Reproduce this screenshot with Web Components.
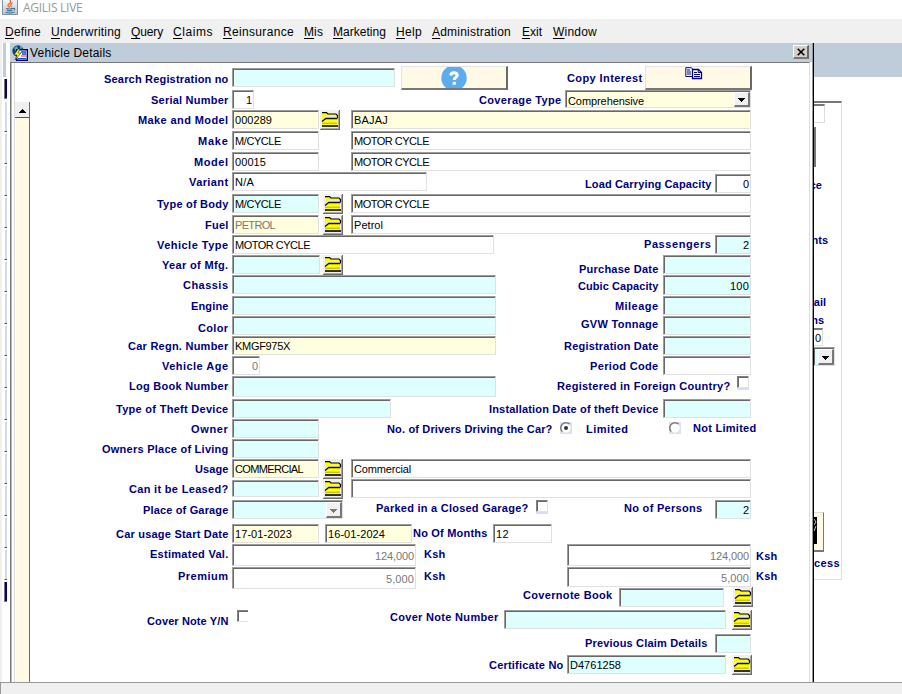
<!DOCTYPE html>
<html lang="en">
<head>
<meta charset="utf-8">
<title>AGILIS LIVE</title>
<style>
html,body{margin:0;width:902px;height:694px;overflow:hidden;background:#fff;font-family:"Liberation Sans",Arial,sans-serif}
</style>
</head>
<body>
<agilis-app></agilis-app>
<script>
const define = (name, html, init) => {
  const t = document.createElement('template');
  t.innerHTML = html;
  customElements.define(name, class extends HTMLElement {
    connectedCallback() {
      if (this.shadowRoot) return;
      this.attachShadow({mode: 'open'}).append(t.content.cloneNode(true));
      if (init) init(this, this.shadowRoot);
    }
  });
};

/* Single line of text whose tracking is adjusted so that it fills the "w" attribute. */
define('fit-text', `<style>
:host{display:block;white-space:pre;overflow:visible}
span{display:inline-block}
</style><span><slot></slot></span>`, (el, root) => {
  const w = +el.getAttribute('w');
  if (!w) return;
  el.style.width = w + 'px';
  const span = root.querySelector('span');
  const natural = span.getBoundingClientRect().width;
  span.style.letterSpacing = ((w - natural) / el.textContent.length) + 'px';
});

define('ui-label', `<style>
:host{display:block;flex:none;height:14px;font:bold 11px/14px "Liberation Sans",Arial,sans-serif;color:#00007b}
</style><slot></slot>`);

define('ui-field', `<style>
:host{display:flex;flex:none;box-sizing:border-box;align-items:center;background:#fff;color:#000;
 border:1px solid #e1e1e1;border-top-color:#9c9c9c;border-left-color:#9c9c9c;
 box-shadow:inset 1px 1px #686868;padding:1px 1px 0 2px;font:11px/14px "Liberation Sans",Arial,sans-serif}
:host([tone=c]){background:#dfffff}
:host([tone=y]){background:#ffffdf}
:host([right]){justify-content:flex-end}
:host([dim]){color:#777}
</style><slot></slot>`);

define('ui-combo', `<style>
:host{display:flex;flex:none;box-sizing:border-box;background:#ffffdf;
 border:1px solid #e1e1e1;border-top-color:#9c9c9c;border-left-color:#9c9c9c;
 box-shadow:inset 1px 1px #686868;padding:1px 0 0 2px;font:11px/14px "Liberation Sans",Arial,sans-serif;align-items:center;justify-content:space-between}
:host([tone=c]){background:#dfffff}
.txt{padding-top:2px}
b{display:flex;align-items:center;justify-content:center;box-sizing:border-box;width:16px;height:100%;background:#f0f0f0;padding-top:2px;
 border:1px solid #fff;border-right:2px solid #777;border-bottom:2px solid #777}
svg{display:block}
:host([dim]) svg{fill:#777}
</style><span class="txt"><slot></slot></span><b><svg width="7" height="4" shape-rendering="crispEdges"><path d="M0 0H7V1H6V2H5V3H4V4H3V3H2V2H1V1H0z"/></svg></b>`);

define('ui-button', `<style>
:host{display:flex;flex:none;box-sizing:border-box;justify-content:center;align-items:flex-start;background:#fff9e6;overflow:hidden;
 border:1px solid #e3e3e3;border-right:2px solid #696969;border-bottom:2px solid #777}
svg{display:block}
</style><slot></slot>`);

define('lov-button', `<style>
:host{display:block;flex:none;width:20px;height:20px}
svg{display:block}
</style><svg width="20" height="20" viewBox="0 0 20 20">
<path d="M0 0H20V20H0z" fill="#f0f0f0"/><path d="M0 19H19V0H20V20H0z" fill="#6a6a6a"/><path d="M1 18H18V1H19V19H1z" fill="#a8a8a8"/>
<path d="M2 3H7L8 4H16L17 5V17H2z" fill="#ff0"/>
<path d="M2 2.6H6.5L8 4H16L17.5 5.5V8" fill="none" stroke="#000" stroke-width="1.2"/>
<path d="M2 10.6L5.5 6.9H16" fill="none" stroke="#e9e9e9" stroke-width="1.8"/>
<path d="M2 11.6L5.8 8.5H17.5" fill="none" stroke="#111" stroke-width="1.3"/>
<path d="M2 13.2H17" stroke="#8d8d00" stroke-width=".7"/>
<path d="M2 16H18" stroke="#000" stroke-width="1.6"/></svg>`);

define('ui-check', `<style>
:host{display:block;flex:none;box-sizing:border-box;width:12px;height:12px;border:1px solid #e3e3e3;border-top-color:#808080;border-left-color:#808080;
 box-shadow:inset 1px 1px #696969,0 2px #d6def4}
:host([open]){border-right:0;box-shadow:inset 1px 1px #696969}
</style>`);

define('ui-radio', `<style>
:host{display:block;flex:none;width:12px;height:12px;background:#dbe3f5}
svg{display:block}
circle.dot{display:none}
:host([on]) circle.dot{display:block}
</style><svg width="12" height="12"><circle cx="6" cy="6" r="5.2" fill="#fff"/><path d="M2.3 9.7A5.2 5.2 0 0 1 9.7 2.3" fill="none" stroke="#777" stroke-width="1.5"/><path d="M9.7 2.3A5.2 5.2 0 0 1 2.3 9.7" fill="none" stroke="#ddd"/><circle class="dot" cx="6" cy="6" r="2" fill="#333"/></svg>`);

define('form-row', `<style>
:host{display:flex;flex:none;align-items:flex-start}
</style><slot></slot>`);

/* The form: each row is [top, ...items]; spans are measured along the form's ruler. */
const L = (a, b, c, text) => ({k: 'label', a, b, y: c - 7, text});
const F = (a, b, y, h, tone = '', text = '', tw = 0, flags = '') => ({k: 'field', a, b, y, h, tone, text, tw, flags});
const I = (a, y) => ({k: 'lov', a, b: a + 20, y});
const rows = [
  [66, L(104,228,79,'Search Registration no'), F(232,395,68,19,'c'), {k:'help',a:401,b:508,y:66}, L(567,642,78,'Copy Interest'), {k:'copy',a:645,b:752,y:66}],
  [90, L(151,228,100,'Serial Number'), F(232,254,90,19,'','1',6,'right'), L(479,561,100,'Coverage Type'), {k:'combo',a:565,b:751,y:90,h:18,tone:'y',text:'Comprehensive',tw:76}],
  [110, L(138,228,120,'Make and Model'), F(232,319,110,19,'y','000289',37), I(320,110), F(351,751,110,19,'y','BAJAJ',34)],
  [131, L(198,228,141,'Make'), F(232,319,131,19,'','M/CYCLE',46), F(351,751,131,19,'','MOTOR CYCLE',75)],
  [152, L(194,228,162,'Model'), F(232,319,152,19,'','00015',31), F(351,751,152,19,'','MOTOR CYCLE',75)],
  [172, L(189,228,182,'Variant'), F(232,427,172,19,'','N/A',19), L(585,711,184,'Load Carrying Capacity'), F(715,751,174,19,'','0',6,'right')],
  [194, L(157,228,204,'Type of Body'), F(232,319,194,19,'c','M/CYCLE',46), I(323,194), F(351,751,194,19,'','MOTOR CYCLE',75)],
  [215, L(205,228,225,'Fuel'), F(232,319,215,19,'y','PETROL',40,'dim'), I(323,215), F(351,751,215,19,'','Petrol',29)],
  [235, L(157,228,245,'Vehicle Type'), F(232,494,235,19,'','MOTOR CYCLE',75), L(644,711,244,'Passengers'), F(715,751,235,19,'c','2',6,'right')],
  [255, L(162,228,265,'Year of Mfg.'), F(232,320,255,19,'c'), I(323,255), L(579,658,269,'Purchase Date'), F(663,751,255,19,'c')],
  [275, L(183,228,285,'Chassis'), F(232,496,275,19,'c'), L(578,658,286,'Cubic Capacity'), F(663,751,275,20,'c','100',19,'right')],
  [296, L(191,228,306,'Engine'), F(232,496,296,19,'c'), L(615,658,306,'Mileage'), F(663,751,296,19,'c')],
  [316, L(198,228,328,'Color'), F(232,496,316,19,'c'), L(581,658,324,'GVW Tonnage'), F(663,751,316,19,'c')],
  [336, L(128,228,346,'Car Regn. Number'), F(232,496,336,19,'y','KMGF975X',55), L(564,658,346,'Registration Date'), F(663,751,336,19,'c')],
  [356, L(162,228,366,'Vehicle Age'), F(232,260,356,19,'','0',6,'right dim'), L(590,658,366,'Period Code'), F(663,751,356,19)],
  [376, L(129,228,386,'Log Book Number'), F(232,496,376,21,'c'), L(557,730,386,'Registered in Foreign Country?'), {k:'check',a:737,b:749,y:376}],
  [399, L(116,228,409,'Type of Theft Device'), F(232,391,399,19,'c'), L(489,658,409,'Installation Date of theft Device'), F(663,751,399,19,'c')],
  [419, L(191,228,429,'Owner'), F(232,319,419,19,'c'), L(387,552,429,'No. of Drivers Driving the Car?'), {k:'radio',a:560,b:572,y:422,flags:'on'}, L(586,628,429,'Limited'), {k:'radio',a:669,b:681,y:422}, L(693,756,428,'Not Limited')],
  [439, L(102,228,449,'Owners Place of Living'), F(232,319,439,19,'c')],
  [459, L(195,228,469,'Usage'), F(232,319,459,19,'y','COMMERCIAL',68), I(323,459), F(351,751,459,19,'','Commercial',57)],
  [479, L(129,228,489,'Can it be Leased?'), F(232,319,480,17,'c'), I(323,479), F(351,751,479,19)],
  [500, L(143,228,510,'Place of Garage'), {k:'combo',a:232,b:343,y:500,h:19,tone:'c',text:'',flags:'dim'}, L(376,528,508,'Parked in a Closed Garage?'), {k:'check',a:536,b:548,y:500}, L(624,702,508,'No of Persons'), F(715,751,500,19,'c','2',6,'right')],
  [524, L(116,228,534,'Car usage Start Date'), F(232,319,524,19,'y','17-01-2023',57), F(325,412,524,19,'y','16-01-2024',57), L(413,487,533,'No Of Months'), F(493,552,524,19,'','12',13)],
  [544, L(150,228,554,'Estimated Val.'), F(232,416,544,22,'','124,000',39,'right dim'), L(424,445,554,'Ksh'), F(567,751,544,22,'','124,000',39,'right dim'), L(756,777,556,'Ksh')],
  [567, L(178,228,576,'Premium'), F(232,416,567,22,'','5,000',28,'right dim'), L(424,445,576,'Ksh'), F(567,751,567,20,'','5,000',28,'right dim'), L(756,777,576,'Ksh')],
  [587, L(523,612,595,'Covernote Book'), F(619,724,588,19,'c'), I(733,587)],
  [610, L(147,228,621,'Cover Note Y/N'), {k:'check',a:237,b:248,y:610,flags:'open'}, L(390,498,617,'Cover Note Number'), F(504,726,610,19,'c'), I(732,610)],
  [634, L(585,707,643,'Previous Claim Details'), F(715,751,634,19,'c')],
  [655, L(489,563,665,'Certificate No'), F(567,726,655,19,'c','D4761258',51), I(732,655)]
];
const fit = (w, t) => t ? `<fit-text w="${w}">${t}</fit-text>` : '';
const help = `<svg width="26" height="22" viewBox="0 0 26 22"><circle cx="13" cy="11" r="12.7" fill="#5cadf0"/><path d="M9.7 8.5Q10 5.7 13 5.7T16.3 8.3C16.3 10.3 13.3 10.3 13.3 13" fill="none" stroke="#fff" stroke-width="3"/><path d="M11.7 14.8H14.9V17.7H11.7z" fill="#fff"/></svg>`;
const copy = `<svg style="margin-right:9px" width="18" height="13" viewBox="0 0 18 13" fill="none" stroke="#00007b"><path d="M7 9.5H.8V.7H6.5L8 2.5" fill="#fff"/><path d="M2 3H5M2 5H6M2 7H6"/><path d="M7.5 2.5H13.5L16.5 5.5V11.5H7.5z" fill="#fff" stroke-width="1.3"/><path d="M13.2 2.5V5.5H16.5M9 5.5H12M9 7.5H15M9 9.5H15"/></svg>`;
const item = (o, gap, top) => {
  const w = o.b - o.a, pos = `margin:${o.y - top}px 0 0 ${gap}px;`;
  const box = `style="${pos}width:${w}px;height:${o.h}px"`;
  switch (o.k) {
    case 'label': return `<ui-label style="${pos}width:${w}px">${fit(w + .5, o.text)}</ui-label>`;
    case 'field': return `<ui-field tone="${o.tone}" ${o.flags} ${box}>${fit(o.tw, o.text)}</ui-field>`;
    case 'combo': return `<ui-combo tone="${o.tone}" ${o.flags || ''} ${box}>${fit(o.tw, o.text)}</ui-combo>`;
    case 'lov': return `<lov-button style="${pos}"></lov-button>`;
    case 'check': return `<ui-check ${o.flags || ''} style="${pos}width:${w}px"></ui-check>`;
    case 'radio': return `<ui-radio ${o.flags || ''} style="${pos}"></ui-radio>`;
    default: return `<ui-button style="${pos}width:${w}px;height:24px">${o.k === 'help' ? help : copy}</ui-button>`;
  }
};
define('vehicle-form', `<style>
:host{display:flex;flex-direction:column;flex:1;min-width:0;padding-top:3px}
</style>`, (el, root) => {
  const box = document.createElement('template');
  box.innerHTML = rows.map(([top, ...items], i) => {
    const next = rows[i + 1] ? rows[i + 1][0] : 676;
    let cursor = 30;
    return `<form-row style="height:${next - top}px">` + items.map(o => {
      const s = item(o, o.a - cursor, top);
      cursor = o.b;
      return s;
    }).join('') + '</form-row>';
  }).join('');
  root.append(document.importNode(box.content, true));
});

define('scroll-track', `<style>
:host{display:flex;flex-direction:column;flex:none;width:15px;padding-top:39px;margin-left:3px;border-left:1px solid #ddd}
.up{display:flex;align-items:center;justify-content:center;height:16px;box-sizing:border-box;background:#f0f0f0;border-right:1px solid #696969;border-bottom:1px solid #555;padding-top:2px}
.track{flex:1;background:#fff9e6;margin-left:1px;border-right:1px solid #696969}
</style><div class="up"><svg width="7" height="4" shape-rendering="crispEdges"><path d="M3 0H4V1H5V2H6V3H7V4H0V3H1V2H2V1H3z"/></svg></div><div class="track"></div>`);

define('vehicle-window', `<style>
:host{display:flex;flex-direction:column;flex:none;box-sizing:border-box;width:804px;background:#fff;border-right:1px solid #000;box-shadow:inset -1px 0 #999}
header{display:flex;align-items:center;height:19px;flex:none;background:#bfccda;padding:0 3px 0 2px;margin-right:1px;font-size:12px;line-height:16px}
header svg{flex:none;margin-right:2px}
header i{display:flex;align-items:center;justify-content:center;margin-left:auto;width:16px;height:14px;box-sizing:border-box;background:#d4d0c8;border:1px solid #fff;border-right:2px solid #696969;border-bottom:2px solid #777;margin-top:-1px}
header i svg{margin:0}
main{flex:1;min-height:0;display:flex;overflow:hidden;border:1px solid #777;border-width:1px 0 0 1px;margin-right:3px;border-right:1px solid #ddd;box-shadow:inset 1px 0 #bbb}
</style><header><svg width="16" height="16" viewBox="0 0 16 16"><circle cx="6" cy="6" r="5.7" fill="#173c8c"/><path d="M2 3L5 1L6 4L4 6zM8 1L11 3L8 4z" fill="#48b7b0"/><path d="M4.7 4.7H15.3V15.3H4.7z" fill="#fff" stroke="#00007b" stroke-width="1.4"/><path d="M9 7H14M10 9H14" stroke="#1846c0" stroke-width="1.3"/><path d="M9 11H14" stroke="#e22"/><path d="M6 13.5H14" stroke="#1846c0"/><path d="M6 4L2 10H5L3 15L9 8H6L8 4z" fill="#ff0" stroke="#222" stroke-width=".6"/></svg><fit-text w="81.5">Vehicle Details</fit-text><i><svg width="8" height="8"><path d="M.7.7L7.3 7.3M7.3.7L.7 7.3" stroke="#000" stroke-width="1.6"/></svg></i></header>
<main><scroll-track></scroll-track><vehicle-form></vehicle-form></main>`);

/* Sliver of the parent form's tab list, left of the window. */
define('parent-left', `<style>
:host{display:flex;flex-direction:column;flex:none;width:4px;padding:0 3px;background:#fff;box-shadow:inset 2px 0 #f0f0f0}
div{flex:none;box-sizing:border-box}
.t{height:34px;width:4px;background:#bfccda;border-right:1px solid #fff}
.n{height:20px;width:3px;margin:2px 0 0 1px;background:#00007b;border-left:1px solid #777;border-bottom:1px solid #777}
.g{height:32px;width:3px;margin-left:1px;border-left:1px solid #fff;background:#d0d9f3;border-top:2px solid #fff;border-bottom:1px solid #555}
.g:nth-of-type(3){margin-top:1px}
</style><div class="t"></div><div class="n"></div>${'<div class="g"></div>'.repeat(15)}<div class="n"></div>`);

/* Sliver of the parent form, right of the window. */
define('parent-right', `<style>
:host{display:block;flex:1;min-width:0;background:#fff}
header{height:34px;background:#bfccda}
section{display:flex;flex-direction:column;align-items:flex-start;margin-top:24px;width:28px;height:479px;box-sizing:border-box;border-top:2px solid #777;border-right:1px solid #ddd;border-bottom:1px solid #ddd;overflow:hidden}
.clip{display:flex;justify-content:flex-end;overflow:hidden;flex:none}
.f{box-sizing:border-box;width:11px;height:19px;margin-top:1px;border:1px solid #ddd;border-left:0;border-top:2px solid #777;flex:none}
.bar{width:2px;height:40px;margin-top:4px;background:#777;flex:none}
.z{width:9px;height:18px;font:11px/16px "Liberation Sans",Arial,sans-serif;padding-left:1px;margin-top:1px;flex:none}
.b{box-sizing:border-box;width:10px;height:40px;margin-top:146px;background:#fff9e6;border-right:1px solid #777;border-bottom:2px solid #777;border-top:1px solid #ddd;padding-top:3px;flex:none}
</style><header></header><section>
<div class="f"></div><div class="bar"></div>
<div class="clip" style="width:8px;margin-top:11px"><ui-label>ce</ui-label></div>
<div class="clip" style="width:14px;margin-top:41px"><ui-label>nts</ui-label></div>
<div class="clip" style="width:12px;margin-top:48px"><ui-label>ail</ui-label></div>
<div class="clip" style="width:10px;margin-top:4px"><ui-label>ns</ui-label></div>
<div class="f z">0</div>
<ui-combo tone="c" style="width:21px;height:19px;margin-top:1px;border-left:0"></ui-combo>
<div class="b"><svg width="4" height="28"><path d="M0 1H3V28H0z"/><path d="M0 3L2 6L0 9M2 10L0 15" stroke="#ccc" fill="none"/></svg></div>
<div class="clip" style="width:27px;margin-top:4px;justify-content:flex-start"><ui-label><fit-text w="26">cess</fit-text></ui-label></div>
</section>`);

define('menu-item', `<style>
:host{display:block;flex:none;font-size:12px;line-height:16px}
</style><slot></slot>`, el => {
  const span = el.querySelector('span'), w = +el.getAttribute('w');
  span.style.letterSpacing = ((w - span.getBoundingClientRect().width) / span.textContent.length) + 'px';
  el.style.width = w + 'px';
});
const menus = [['Define',36],['Underwriting',70],['Query',32],['Claims',40],['Reinsurance',71],['Mis',19],['Marketing',53],['Help',26],['Administration',79],['Exit',20],['Window',44]];
define('menu-bar', `<style>
:host{display:flex;align-items:center;gap:10px;height:24px;flex:none;background:#f0f0f0;padding:2px 5px 0;box-sizing:border-box}
u{text-underline-offset:2px;text-decoration-thickness:1px}
.wide{margin-left:1px}
</style>${menus.map(([t,w]) => `<menu-item w="${w}"${t === 'Exit' || t === 'Window' ? ' class="wide"' : ''}><span><u>${t[0]}</u>${t.slice(1)}</span></menu-item>`).join('')}`);

define('app-title', `<style>
:host{display:flex;align-items:flex-start;height:19px;flex:none;background:#fff;color:#999;font:12px/16px "Open Sans","Noto Sans",sans-serif;padding-left:2px;box-sizing:border-box;overflow:hidden}
svg{flex:none;margin-right:5px}
</style><svg width="16" height="16" viewBox="0 0 16 16"><defs><linearGradient id="g" x2="0" y2="1"><stop stop-color="#fff"/><stop offset="1" stop-color="#b8c5cf"/></linearGradient></defs><path d="M.5 -3H15.5V14.5H.5z" fill="url(#g)" stroke="#8092a0"/><path d="M8 0Q9.5 2 7 4T8 7.5M10.5 2.5Q7.5 5 9.5 7" fill="none" stroke="#e5672a" stroke-width="1.3"/><path d="M4 8.5Q7 9.5 11 8.4M5 10.4Q8 11.3 10.5 10.3M3.5 12.3Q8 13.8 12.5 12M11 8.5Q14 8 12 10.3" fill="none" stroke="#41739a" stroke-width="1.1"/></svg><fit-text w="59.5">AGILIS LIVE</fit-text>`);

define('agilis-app', `<style>
:host{display:flex;flex-direction:column;width:902px;height:694px;overflow:hidden}
.desk{display:flex;height:639px;flex:none;overflow:hidden}
footer{flex:1;box-sizing:border-box;background:#f0f0f0;border-top:1px solid #999;border-left:1px solid #999}
</style><app-title></app-title><menu-bar></menu-bar>
<div class="desk"><parent-left></parent-left><vehicle-window></vehicle-window><parent-right></parent-right></div><footer></footer>`);
</script>
</body>
</html>
